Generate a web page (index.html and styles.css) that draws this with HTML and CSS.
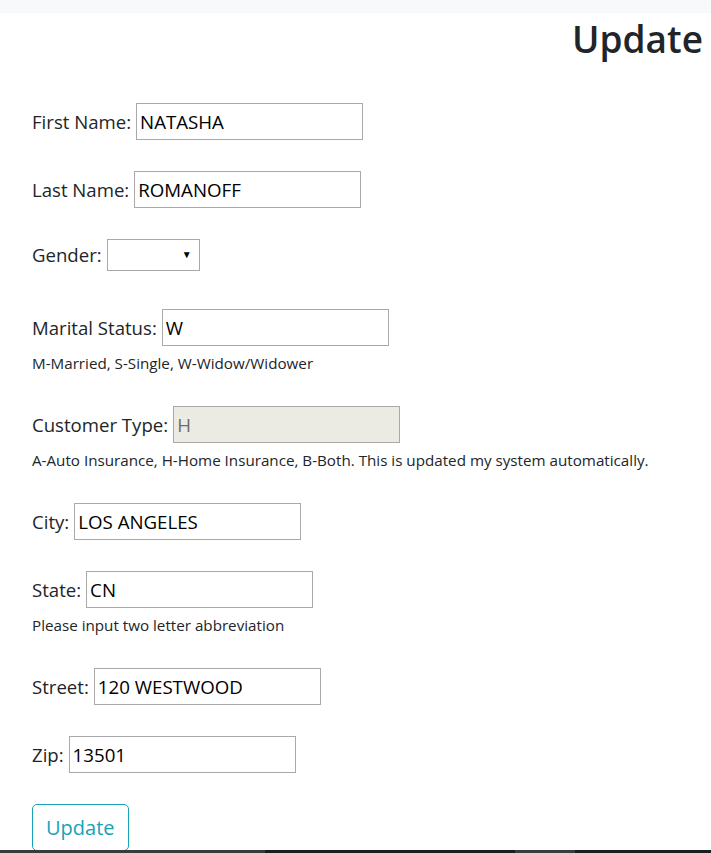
FILE: index.html
```html
<!DOCTYPE html>
<html lang="en">
<head>
<meta charset="utf-8">
<title>Update</title>
<link rel="stylesheet" href="styles.css">
</head>
<body>
<div class="topbar"></div>
<h2 class="title">Update</h2>
<form class="form">
  <div class="row"><label>First Name:</label><input class="field" type="text" value="NATASHA"></div>
  <div class="row"><label>Last Name:</label><input class="field" type="text" value="ROMANOFF"></div>
  <div class="row row-gender"><label>Gender:</label><span class="select-wrap"><select class="select"><option></option></select><span class="arrow">▼</span></span></div>
  <div class="group">
    <div class="row"><label>Marital Status:</label><input class="field" type="text" value="W"></div>
    <p class="help">M-Married, S-Single, W-Widow/Widower</p>
  </div>
  <div class="group">
    <div class="row"><label>Customer Type:</label><input class="field" type="text" value="H" disabled></div>
    <p class="help">A-Auto Insurance, H-Home Insurance, B-Both. This is updated my system automatically.</p>
  </div>
  <div class="row"><label>City:</label><input class="field" type="text" value="LOS ANGELES"></div>
  <div class="group">
    <div class="row"><label>State:</label><input class="field" type="text" value="CN"></div>
    <p class="help">Please input two letter abbreviation</p>
  </div>
  <div class="row"><label>Street:</label><input class="field" type="text" value="120 WESTWOOD"></div>
  <div class="row"><label>Zip:</label><input class="field" type="text" value="13501"></div>
  <div class="row"><button class="btn" type="button">Update</button></div>
</form>
<div class="screen-edge"></div>
</body>
</html>
```

FILE: styles.css
```css
html, body {
  margin: 0;
  padding: 0;
  background: #ffffff;
}
body {
  font-family: "Open Sans", "Noto Sans", sans-serif;
  color: #212529;
  font-size: 18px;
  overflow: hidden;
  height: 853px;
}
.topbar {
  height: 13px;
  background: #f8f9fa;
}
.title {
  margin: 0;
  padding: 2px 8px 0 0;
  text-align: right;
  font-size: 37px;
  font-weight: 600;
  line-height: 48px;
  color: #212529;
}
.form {
  display: flex;
  flex-direction: column;
  align-items: flex-start;
  gap: 31px;
  padding: 40px 0 0 32px;
}
.row {
  display: flex;
  align-items: center;
  gap: 5px;
}
.row label {
  font-size: 18.6px;
  line-height: 24px;
}
.row-gender {
  margin-bottom: 7px;
}
.field {
  box-sizing: border-box;
  width: 227px;
  height: 37px;
  margin: 0;
  padding: 0 3px;
  border: 1px solid #a9a9a9;
  border-radius: 0;
  font-family: "Open Sans", "Noto Sans", sans-serif;
  font-size: 18.7px;
  color: #000;
  background: #fff;
  outline: none;
}
.field:disabled {
  background: #ebebe4;
  color: #6d6d6d;
}
.select-wrap {
  position: relative;
  display: inline-block;
}
.select {
  -webkit-appearance: none;
  appearance: none;
  box-sizing: border-box;
  width: 93px;
  height: 32px;
  margin: 0;
  border: 1px solid #a9a9a9;
  border-radius: 0;
  background: #fff;
  display: block;
}
.arrow {
  position: absolute;
  right: 8px;
  top: 9px;
  font-size: 10px;
  line-height: 12px;
  color: #000;
  pointer-events: none;
}
.group {
  display: flex;
  flex-direction: column;
  align-items: flex-start;
}
.help {
  margin: 6px 0 1px 0;
  font-size: 15.2px;
  line-height: 22px;
  color: #212529;
}
.btn {
  box-sizing: border-box;
  height: 47px;
  padding: 0 13px;
  border: 1px solid #17a2b8;
  border-radius: 5px;
  background: #fff;
  color: #17a2b8;
  font-family: "Open Sans", "Noto Sans", sans-serif;
  font-size: 20px;
  line-height: 30px;
}
.screen-edge {
  position: fixed;
  left: 0;
  right: 0;
  bottom: 0;
  height: 3px;
  background: linear-gradient(to right, #3a3a3a 0, #3a3a3a 265px, #1c1c1c 265px, #1c1c1c 515px, #3c3c3c 515px, #3c3c3c 575px, #1c1c1c 575px);
}
```
